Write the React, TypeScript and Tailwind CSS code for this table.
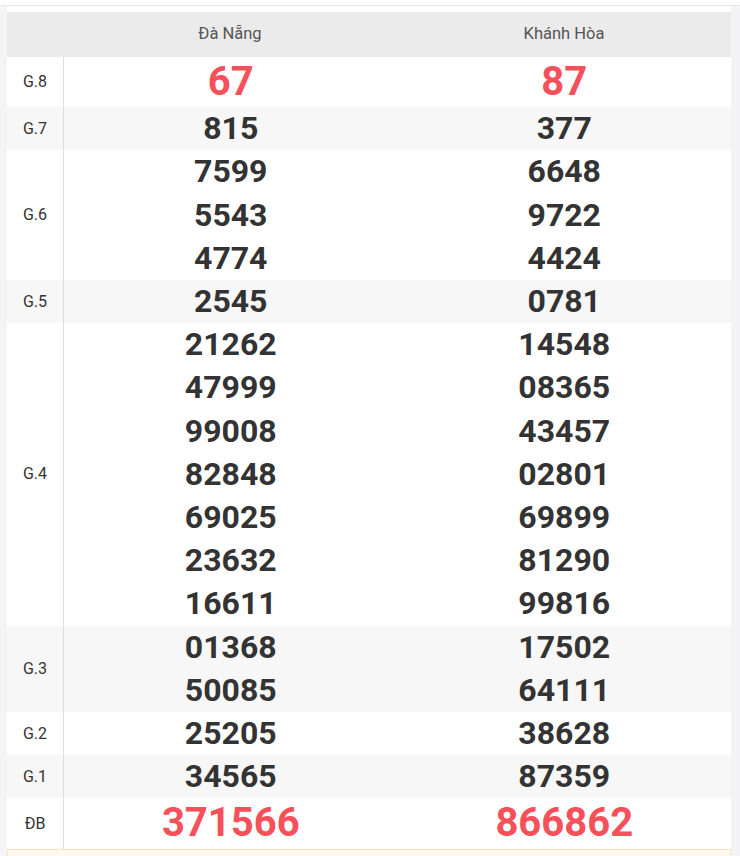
import React from 'react';

type Prize = { label: string; rows: [string, string][]; red?: boolean };

const prizes: Prize[] = [
  { label: 'G.8', rows: [['67', '87']], red: true },
  { label: 'G.7', rows: [['815', '377']] },
  { label: 'G.6', rows: [['7599', '6648'], ['5543', '9722'], ['4774', '4424']] },
  { label: 'G.5', rows: [['2545', '0781']] },
  {
    label: 'G.4',
    rows: [
      ['21262', '14548'],
      ['47999', '08365'],
      ['99008', '43457'],
      ['82848', '02801'],
      ['69025', '69899'],
      ['23632', '81290'],
      ['16611', '99816'],
    ],
  },
  { label: 'G.3', rows: [['01368', '17502'], ['50085', '64111']] },
  { label: 'G.2', rows: [['25205', '38628']] },
  { label: 'G.1', rows: [['34565', '87359']] },
  { label: 'ĐB', rows: [['371566', '866862']], red: true },
];

const NumCell: React.FC<{ values: string[]; red?: boolean }> = ({ values, red }) => (
  <div className="flex-1 flex flex-col items-center">
    {values.map((v, i) =>
      red ? (
        <div key={i} className="text-[40px] leading-[50.5px] font-bold text-[#f6505b]">{v}</div>
      ) : (
        <div key={i} className="text-[32px] leading-[43.2px] font-bold text-[#333333]">{v}</div>
      )
    )}
  </div>
);

export default function App() {
  return (
    <div className="min-h-[856px] bg-[#f4f4f6] font-['Roboto',sans-serif] overflow-hidden">
      <div className="h-[6px] bg-white border-b border-[#e6e6e6]" />
      <div className="pl-[7px] pr-[9px]">
        <div className="bg-white pt-[6px]">
          {/* Header */}
          <div className="flex h-[44.7px] items-center bg-[#ebebeb] text-[16.5px] text-[#555555]">
            <div className="w-[56px]" />
            <div className="flex-1 text-center">Đà Nẵng</div>
            <div className="flex-1 text-center">Khánh Hòa</div>
          </div>

          {/* Prize rows */}
          {prizes.map((p, idx) => (
            <div key={p.label} className={`flex ${idx % 2 === 1 ? 'bg-[#f7f7f7]' : 'bg-white'}`}>
              <div className="w-[57px] shrink-0 border-r border-[#dddddd] flex items-center justify-center text-[16px] text-[#333333]">
                {p.label}
              </div>
              <NumCell values={p.rows.map((r) => r[0])} red={p.red} />
              <NumCell values={p.rows.map((r) => r[1])} red={p.red} />
            </div>
          ))}

          {/* Footer strip */}
          <div className="h-[30px] bg-[#fff9ef] border border-[#f6e4c3]" />
        </div>
      </div>
    </div>
  );
}
